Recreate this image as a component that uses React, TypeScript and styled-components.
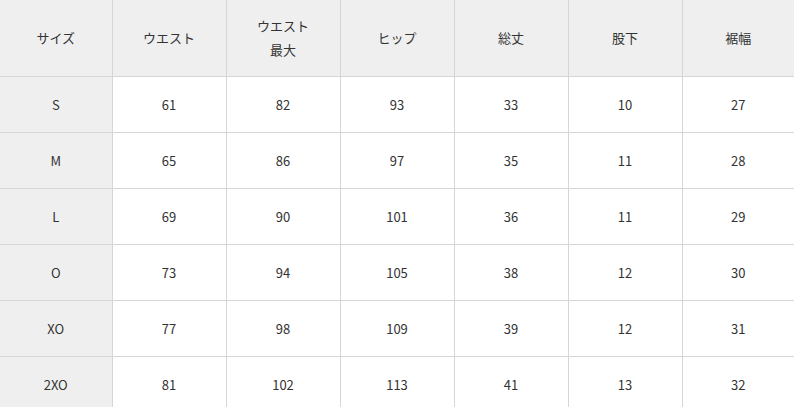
import React from "react";
import styled, { createGlobalStyle } from "styled-components";

const GlobalStyle = createGlobalStyle`
  html, body {
    margin: 0;
    padding: 0;
    background: #ffffff;
  }
  body {
    font-family: "Noto Sans CJK JP", "Noto Sans", sans-serif;
    color: #333333;
  }
`;

const SizeTable = styled.table`
  width: 794px;
  table-layout: fixed;
  border-collapse: collapse;
  font-size: 13px;
  line-height: 24px;
`;

const HeadCell = styled.th`
  height: 76px;
  padding: 0 8px;
  background: #efefef;
  font-weight: 400;
  text-align: center;
  vertical-align: middle;
  border: 1px solid #d6d6d6;
  border-top: none;

  &:first-child {
    border-left: none;
  }
  &:last-child {
    border-right: none;
  }
`;

const BodyCell = styled.td<{ $label?: boolean }>`
  height: 55px;
  padding: 0 8px;
  background: ${(p) => (p.$label ? "#efefef" : "#ffffff")};
  text-align: center;
  vertical-align: middle;
  border: 1px solid #d6d6d6;

  &:first-child {
    border-left: none;
  }
  &:last-child {
    border-right: none;
  }
`;

const headers: React.ReactNode[] = [
  "サイズ",
  "ウエスト",
  <>
    ウエスト
    <br />
    最大
  </>,
  "ヒップ",
  "総丈",
  "股下",
  "裾幅",
];

const rows: (string | number)[][] = [
  ["S", 61, 82, 93, 33, 10, 27],
  ["M", 65, 86, 97, 35, 11, 28],
  ["L", 69, 90, 101, 36, 11, 29],
  ["O", 73, 94, 105, 38, 12, 30],
  ["XO", 77, 98, 109, 39, 12, 31],
  ["2XO", 81, 102, 113, 41, 13, 32],
];

const colWidths = [112, 114, 114, 114, 114, 114, 112];

const App: React.FC = () => {
  return (
    <>
      <GlobalStyle />
      <SizeTable>
        <colgroup>
          {colWidths.map((w, i) => (
            <col key={i} style={{ width: w }} />
          ))}
        </colgroup>
        <thead>
          <tr>
            {headers.map((h, i) => (
              <HeadCell key={i}>{h}</HeadCell>
            ))}
          </tr>
        </thead>
        <tbody>
          {rows.map((row) => (
            <tr key={row[0]}>
              {row.map((v, i) => (
                <BodyCell key={i} $label={i === 0}>
                  {v}
                </BodyCell>
              ))}
            </tr>
          ))}
        </tbody>
      </SizeTable>
    </>
  );
};

export default App;
